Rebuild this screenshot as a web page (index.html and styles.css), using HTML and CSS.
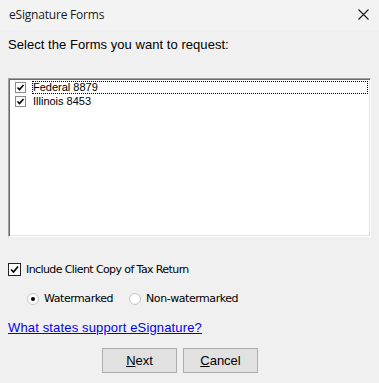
FILE: index.html
```html
<!DOCTYPE html>
<html>
<head>
<meta charset="utf-8">
<link rel="stylesheet" href="styles.css">
</head>
<body>
<div class="dialog">
  <div class="titlebar">
    <span class="title">eSignature Forms</span>
    <svg class="close" width="11" height="11" viewBox="0 0 11 11"><path d="M0.5 0.5 L10.5 10.5 M10.5 0.5 L0.5 10.5" stroke="#1a1a1a" stroke-width="1.1" fill="none"/></svg>
  </div>
  <div class="content">
    <div class="prompt">Select the Forms you want to request:</div>
    <div class="listbox">
      <div class="item focus"><span class="cb small"><svg viewBox="0 0 9 9"><path d="M1.5 4.5 L3.5 6.5 L7.5 2" stroke="#000" stroke-width="1.6" fill="none"/></svg></span><span class="label">Federal 8879</span></div>
      <div class="item"><span class="cb small"><svg viewBox="0 0 9 9"><path d="M1.5 4.5 L3.5 6.5 L7.5 2" stroke="#000" stroke-width="1.6" fill="none"/></svg></span><span class="label">Illinois 8453</span></div>
    </div>
    <div class="option-row">
      <span class="cb big"><svg viewBox="0 0 11 11"><path d="M2 5.5 L4.5 8 L9 2.5" stroke="#000" stroke-width="1.7" fill="none"/></svg></span>
      <span class="opt-label">Include Client Copy of Tax Return</span>
    </div>
    <div class="radio-row">
      <span class="radio checked"></span><span class="opt-label r1">Watermarked</span>
      <span class="radio"></span><span class="opt-label">Non-watermarked</span>
    </div>
    <a class="link" href="#">What states support eSignature?</a>
    <div class="buttons">
      <button class="btn"><u>N</u>ext</button>
      <button class="btn"><u>C</u>ancel</button>
    </div>
  </div>
</div>
</body>
</html>
```

FILE: styles.css
```css
html, body {
  margin: 0;
  padding: 0;
  background: #f0f0f0;
}
.dialog {
  width: 379px;
  height: 383px;
  background: #f0f0f0;
  font-family: "Liberation Sans", Arial, sans-serif;
  color: #000;
}
.titlebar {
  height: 30px;
  background: #f3f3f3;
  display: flex;
  align-items: center;
  justify-content: space-between;
  padding: 0 9px 0 9px;
  box-sizing: border-box;
}
.title {
  font-family: "Open Sans", "Noto Sans", sans-serif;
  font-size: 12px;
  letter-spacing: -0.2px;
  color: #1a1a1a;
  margin-top: -2px;
}
.close {
  margin-top: -1px;
  margin-right: 1px;
}
.content {
  padding: 0 8px;
}
.prompt {
  margin-top: 7px;
  font-size: 13px;
  line-height: 16px;
  letter-spacing: 0.05px;
}
.listbox {
  margin-top: 25px;
  height: 159px;
  background: #fff;
  box-sizing: border-box;
  border-top: 1px solid #a0a0a0;
  border-left: 1px solid #a0a0a0;
  border-right: 1px solid #fff;
  border-bottom: 1px solid #fff;
  box-shadow: inset 1px 1px 0 #696969, inset -1px -1px 0 #e3e3e3;
  padding: 2px 2px 2px 2px;
}
.item {
  height: 13px;
  display: flex;
  align-items: center;
  font-size: 11px;
  padding-left: 4px;
  margin-bottom: 1px;
}
.label {
  flex: 1;
  padding-left: 1px;
  line-height: 13px;
  height: 13px;
  box-sizing: border-box;
  margin-left: 6px;
}
.item.focus .label {
  outline: 1px dotted #000;
  outline-offset: -1px;
}
.cb {
  display: inline-flex;
  align-items: center;
  justify-content: center;
  box-sizing: border-box;
  background: #fff;
  flex: none;
}
.cb.small {
  width: 11px;
  height: 11px;
  border: 1px solid #8a8a8a;
}
.cb.small svg {
  width: 9px;
  height: 9px;
}
.cb.big {
  width: 13px;
  height: 13px;
  border: 1px solid #222;
}
.cb.big svg {
  width: 11px;
  height: 11px;
}
.option-row {
  margin-top: 26px;
  display: flex;
  align-items: center;
  height: 13px;
}
.opt-label {
  font-family: "DejaVu Sans", sans-serif;
  font-size: 11px;
  letter-spacing: -0.6px;
  margin-left: 5px;
}
.radio-row {
  margin-top: 16px;
  display: flex;
  align-items: center;
  height: 13px;
  padding-left: 19px;
}
.radio-row .opt-label {
  letter-spacing: -0.45px;
}
.radio {
  width: 12px;
  height: 12px;
  box-sizing: border-box;
  border-radius: 50%;
  border: 1px solid #c8c8c8;
  background: radial-gradient(circle, #fff 50%, #f0f0f0 100%);
  position: relative;
  flex: none;
}
.radio.checked::after {
  content: "";
  position: absolute;
  left: 3px;
  top: 3px;
  width: 4px;
  height: 4px;
  border-radius: 50%;
  background: #000;
}
.r1 {
  margin-right: 16px;
}
.radio-row .opt-label {
  margin-left: 5px;
}
.link {
  display: block;
  margin-top: 15px;
  font-size: 13px;
  line-height: 16px;
  color: #0000ff;
  text-decoration: underline;
  letter-spacing: 0.15px;
  width: max-content;
}
.buttons {
  margin-top: 12px;
  display: flex;
  gap: 6px;
  padding-left: 94px;
}
.btn {
  width: 75px;
  height: 25px;
  margin: 0;
  padding: 0;
  box-sizing: border-box;
  border: 1px solid #adadad;
  background: #e1e1e1;
  font-family: "Liberation Sans", Arial, sans-serif;
  font-size: 13px;
  color: #000;
  border-radius: 0;
}
```
